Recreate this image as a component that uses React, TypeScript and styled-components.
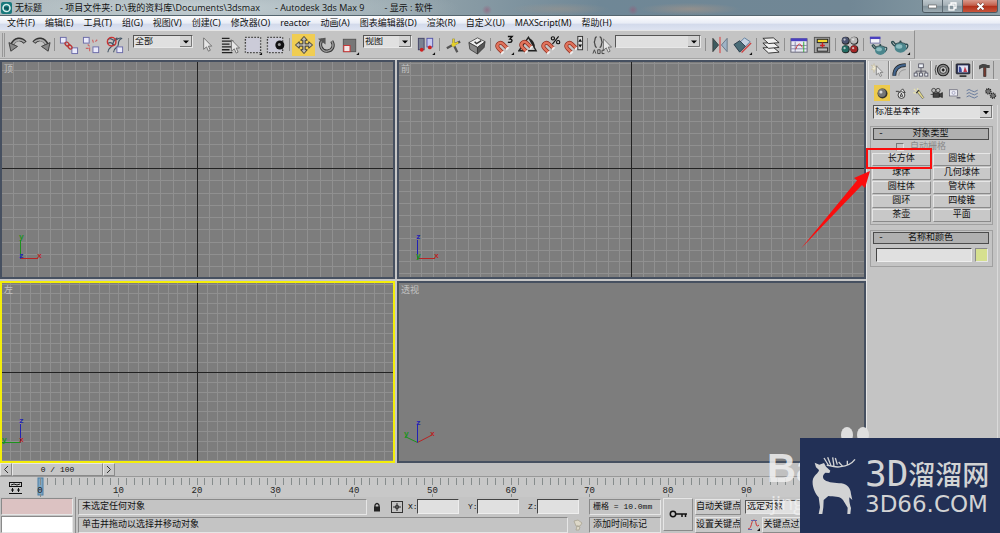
import React from "react";
import styled, { createGlobalStyle, css } from "styled-components";

const UI_FONT = `"Open Sans", "Noto Sans CJK SC", sans-serif`;
const MENU_FONT = `"Noto Sans", "Noto Sans CJK SC", sans-serif`;
const PANEL_FONT = `"Liberation Mono", "Noto Sans CJK SC", monospace`;

const GlobalStyle = createGlobalStyle`
  * { box-sizing: border-box; }
  body { margin: 0; background: #c4c4c4; overflow: hidden; }
  button, input, select { margin: 0; padding: 0; border: 0; border-radius: 0; color: inherit; font: inherit; }
  svg { display: block; flex: none; }
`;

const raised = css`
  border: 1px solid;
  border-color: #e6e6e6 #8a8a8a #8a8a8a #e6e6e6;
`;
const sunken = css`
  border: 1px solid;
  border-color: #8a8a8a #e6e6e6 #e6e6e6 #8a8a8a;
`;

const Window = styled.div`
  position: relative;
  display: flex;
  flex-direction: column;
  height: 100vh;
  overflow: hidden;
  background: #c4c4c4;
  color: #111;
  font: 9px/12px ${PANEL_FONT};
`;

/* ---------- title bar ---------- */

const TitleBar = styled.header`
  display: flex;
  align-items: center;
  flex: none;
  height: 16px;
  padding-left: 1px;
  border-bottom: 1px solid #55666f;
  background:
    radial-gradient(ellipse 260px 26px at 200px 8px, rgba(205, 216, 220, 0.8), transparent),
    radial-gradient(circle 5px at 487px 10px, rgba(150, 90, 120, 0.6), transparent),
    radial-gradient(circle 5px at 633px 10px, rgba(150, 90, 120, 0.6), transparent),
    radial-gradient(ellipse 50px 6px at 560px 9px, rgba(160, 150, 140, 0.5), transparent),
    radial-gradient(ellipse 50px 6px at 690px 9px, rgba(170, 150, 135, 0.6), transparent),
    linear-gradient(90deg, #a9b4b8, #95a5ac 40%, #6f8796 60%, #718795 85%, #8ca0a8);
  font-family: ${UI_FONT};
  white-space: pre;
`;
const TitleText = styled.h1`
  display: flex;
  flex: 1;
  margin: 0 0 0 3px;
  font-size: 9px;
  font-weight: 400;
  line-height: 14px;
`;
const TitlePart = styled.span<{ $gap?: number }>`
  margin-right: ${(p) => p.$gap ?? 0}px;
`;
const WindowButtons = styled.div`
  display: flex;
  align-self: flex-start;
  height: 13px;
  margin-right: 2px;
  border: 1px solid #4d5a62;
  border-top: 0;
  border-radius: 0 0 3px 3px;
  overflow: hidden;
`;
const WindowButton = styled.button<{ $close?: boolean }>`
  display: flex;
  align-items: center;
  justify-content: center;
  width: ${(p) => (p.$close ? 34 : 20)}px;
  border-right: ${(p) => (p.$close ? 0 : 1)}px solid #5b6870;
  background: ${(p) =>
    p.$close
      ? "linear-gradient(#d99a8c, #c4604c 45%, #b02e18 50%, #c8553c)"
      : "linear-gradient(#bcc6cb, #a5b0b6 45%, #83929a 50%, #9cabb2)"};
`;

/* ---------- menu bar ---------- */

const MenuBar = styled.nav`
  display: flex;
  flex: none;
  gap: 10px;
  height: 14px;
  padding-left: 7px;
  background: linear-gradient(#fdfdfe, #e9edf6 50%, #d3daeb 60%, #dde3f1);
  font: 9px/14px ${MENU_FONT};
`;
const MenuItem = styled.button`
  background: none;
  white-space: nowrap;
`;

/* ---------- toolbar ---------- */

const ToolbarRow = styled.div`
  display: flex;
  flex: none;
  height: 30px;
  border-bottom: 1px solid #d8d8d8;
`;
const Toolbar = styled.div`
  display: flex;
  align-items: center;
  padding: 0 2px 0 0;
  border-top: 1px solid #e4e4e4;
  border-right: 1px solid #909090;
  border-bottom: 1px solid #a4a4a4;
`;
const Grip = styled.span`
  width: 3px;
  height: 24px;
  margin: 0 1px 0 2px;
  border: solid #979797;
  border-width: 0 1px;
`;
const ToolButton = styled.button<{ $active?: boolean }>`
  display: flex;
  align-items: center;
  justify-content: center;
  width: 23px;
  height: 22px;
  background: ${(p) => (p.$active ? "#f0cd52" : "none")};
`;
const Separator = styled.span`
  width: 1px;
  height: 13px;
  margin: 0 2px;
  background: #8f8f8f;
`;

const SelectBox = styled.span<{ $width?: number; $tool?: boolean }>`
  position: relative;
  display: block;
  flex: none;
  width: ${(p) => (p.$width ? `${p.$width}px` : "auto")};
  height: ${(p) => (p.$tool ? 13 : 14)}px;
  margin: ${(p) => (p.$tool ? "0 2px 7px" : "0")};
  border: 1px solid;
  border-color: #555 #e8e8e8 #e8e8e8 #555;
  background: #e0e0e0;
  svg {
    position: absolute;
    right: 0;
    top: 0;
    height: 100%;
    pointer-events: none;
  }
`;
const NativeSelect = styled.select`
  display: block;
  width: 100%;
  height: 100%;
  padding: 1px 0 0 1px;
  appearance: none;
  background: transparent;
  font: 9px/11px ${PANEL_FONT};
`;

function Dropdown(props: { label: string; value: string; width?: number; tool?: boolean }) {
  return (
    <SelectBox $width={props.width} $tool={props.tool}>
      <NativeSelect aria-label={props.label}>
        <option>{props.value}</option>
      </NativeSelect>
      <svg width="12" viewBox="0 0 12 11" preserveAspectRatio="none">
        <rect width="12" height="11" fill="#d2d2d2" />
        <path d="M0 10.5H11.5V0" fill="none" stroke="#777" />
        <path d="M3 4.500h6L6 7.500z" fill="#000" />
      </svg>
    </SelectBox>
  );
}

/* ---------- workspace ---------- */

const Workspace = styled.main`
  display: flex;
  flex: 1;
  min-height: 0;
`;
const Viewports = styled.div`
  display: grid;
  flex: 1;
  grid-template-columns: 395fr 469fr;
  grid-template-rows: 219fr 182fr;
  gap: 2px;
  min-width: 0;
  background: #c6c6c6;
`;
const ViewportFrame = styled.section<{ $active?: boolean }>`
  position: relative;
  min-width: 0;
  min-height: 0;
  border: 2px solid ${(p) => (p.$active ? "#f4ee08" : "#465060")};
  background: #7d7d7d;
  overflow: hidden;
`;
const GridCanvas = styled.svg`
  width: 100%;
  height: 100%;
`;
const ViewportLabel = styled.h2`
  position: absolute;
  left: 2px;
  top: 2px;
  margin: 0;
  color: #c3c3c3;
  font-size: 9px;
  font-weight: 400;
`;
const AxisMark = styled.svg`
  position: absolute;
  left: 0;
  bottom: 13px;
  font: 8px "Liberation Mono", monospace;
  font-weight: 700;
`;

type Axis = { name: string; color: string; x: number; y: number; tx: number; ty: number };

function Viewport(props: {
  title: string;
  active?: boolean;
  step?: number;
  cy?: string;
  axes: Axis[];
}) {
  const { step } = props;
  const lines = Array.from({ length: 101 }, (_, i) => i - 50).filter((i) => i !== 0);
  return (
    <ViewportFrame $active={props.active}>
      {step && (
        <GridCanvas>
          <svg x="49.800%" y={props.cy} overflow="visible" shapeRendering="crispEdges">
            {lines.map((i) => (
              <g key={i} stroke="#909090">
                <path d={`M${Math.round(i * step) + 0.5} -900V900`} />
                <path d={`M-2000 ${Math.round(i * step) + 0.5}H2000`} />
              </g>
            ))}
            <path d="M0.500 -900V900M-2000 0.500H2000" stroke="#222" />
          </svg>
        </GridCanvas>
      )}
      <ViewportLabel>{props.title}</ViewportLabel>
      <AxisMark width="46" height="34" viewBox="0 0 46 34">
        {props.axes.map((a) => (
          <g key={a.name}>
            <path d={`M18.500 28.500L${a.x} ${a.y}`} stroke={a.color} />
            <text x={a.tx} y={a.ty} fill={a.color}>
              {a.name}
            </text>
          </g>
        ))}
      </AxisMark>
    </ViewportFrame>
  );
}

const RED = "#b82424";
const GREEN = "#1c931c";
const BLUE = "#2222b4";

/* ---------- command panel ---------- */

const CommandPanel = styled.aside`
  display: flex;
  flex: none;
  flex-direction: column;
  width: 134px;
  padding: 1px 2px 0 1px;
  border-left: 1px solid #e6e6e6;
`;
const TabStrip = styled.div`
  display: flex;
  flex: none;
  height: 19px;
  border-bottom: 1px solid #e2e2e2;
`;
const TabButton = styled.button<{ $active?: boolean }>`
  display: flex;
  align-items: center;
  justify-content: center;
  width: 21px;
  border-right: 1px solid #8a8a8a;
  border-left: 1px solid #e6e6e6;
  background: ${(p) => (p.$active ? "#cdcdcd" : "none")};
`;
const CategoryRow = styled.div`
  display: flex;
  flex: none;
  gap: 2px;
  margin: 5px 0 4px 6px;
`;
const CategoryButton = styled.button<{ $active?: boolean }>`
  display: flex;
  align-items: center;
  justify-content: center;
  width: 16px;
  height: 16px;
  background: ${(p) => (p.$active ? "#edca4c" : "none")};
`;
const PanelBody = styled.div`
  display: flex;
  flex: 1;
  flex-direction: column;
  gap: 5px;
  padding: 0 4px 0 2px;
  border-right: 1px solid #dadada;
`;
const PanelSelect = styled.div`
  margin: 0 0 2px 3px;
`;
const Rollout = styled.section`
  padding: 0 1px 2px;
  ${sunken}
  border-color: #a0a0a0;
`;
const RolloutTitle = styled.button`
  display: grid;
  grid-template-columns: 8px 1fr 12px;
  align-items: center;
  width: calc(100% - 3px);
  height: 12px;
  margin: 1px 2px 0 1px;
  padding-left: 3px;
  border: 1px solid #4c4c4c;
  background: #b0b0b0;
  line-height: 10px;
`;
const AutoGrid = styled.label`
  display: flex;
  align-items: center;
  gap: 6px;
  height: 13px;
  padding-left: 24px;
  color: #8a8a8a;
`;
const TickBox = styled.input`
  width: 8px;
  height: 8px;
  appearance: none;
  border: 1px solid;
  border-color: #777 #e2e2e2 #e2e2e2 #777;
`;
const ButtonGrid = styled.div`
  display: grid;
  grid-template-columns: 1fr 1fr;
  gap: 1px 2px;
`;
const ObjectButton = styled.button`
  height: 13px;
  background: #c8c8c8;
  line-height: 11px;
  ${raised}
`;
const NameRow = styled.div`
  display: flex;
  gap: 3px;
  padding: 4px 3px 2px 4px;
`;
const TextField = styled.input`
  flex: 1;
  min-width: 0;
  height: 14px;
  border: 1px solid;
  border-color: #444 #eee #eee #444;
  background: #e0e0e0;
`;
const Swatch = styled.button`
  width: 13px;
  height: 14px;
  background: #d6e08f;
  ${sunken}
`;

/* ---------- time slider, track bar, status bar ---------- */

const SliderRow = styled.div`
  display: flex;
  flex: none;
  height: 14px;
  background: #c0c0c0;
  border-bottom: 1px solid #999;
`;
const SliderButton = styled.button<{ $width: number }>`
  display: flex;
  align-items: center;
  justify-content: center;
  width: ${(p) => p.$width}px;
  height: 13px;
  background: #c6c6c6;
  font-size: 8px;
  white-space: pre;
  ${raised}
`;
const TrackRow = styled.div`
  display: flex;
  flex: none;
  height: 20px;
  background: #c8c8c8;
`;
const CurveToggle = styled.button`
  width: 40px;
  padding: 2px 0 0 8px;
  background: none;
`;
const Ruler = styled.svg`
  flex: 1;
  min-width: 0;
  height: 20px;
  margin-right: 175px;
  overflow: visible;
  font: 9px "Liberation Mono", monospace;
`;
const StatusBar = styled.footer`
  display: flex;
  flex: none;
  height: 36px;
`;
const Listener = styled.div`
  display: flex;
  flex-direction: column;
  gap: 1px;
  flex: none;
  width: 76px;
  padding: 1px 3px 0 1px;
  border-right: 1px solid #8c8c8c;
`;
const ListenerLine = styled.input<{ $pink?: boolean }>`
  width: 72px;
  height: 17px;
  background: ${(p) => (p.$pink ? "#dcc2c2" : "#fff")};
  ${sunken}
`;
const StatusColumn = styled.div<{ $width?: number }>`
  display: flex;
  flex-direction: column;
  gap: 1px;
  flex: ${(p) => (p.$width ? "none" : "1")};
  width: ${(p) => (p.$width ? `${p.$width}px` : "auto")};
  min-width: 0;
  padding: 1px 0 0 2px;
`;
const StatusLine = styled.div`
  display: flex;
  align-items: center;
  height: 17px;
`;
const Message = styled.output`
  flex: 1;
  min-width: 0;
  height: 16px;
  padding: 0 3px;
  line-height: 14px;
  white-space: nowrap;
  overflow: hidden;
  ${sunken}
`;
const IconButton = styled.button<{ $width: number }>`
  display: flex;
  align-items: center;
  justify-content: center;
  width: ${(p) => p.$width}px;
  height: 16px;
  background: none;
`;
const Coordinate = styled.label`
  display: flex;
  align-items: center;
  width: 60px;
  padding-left: 1px;
  font-size: 8px;
  input {
    flex: none;
    width: 42px;
    height: 15px;
    margin-left: -1px;
  }
`;
const CoordName = styled.span`
  width: 10px;
`;
const KeyButton = styled.button`
  display: flex;
  align-items: center;
  justify-content: center;
  flex: none;
  width: 30px;
  height: 33px;
  margin: 1px 0 0 2px;
  background: #c6c6c6;
  ${raised}
`;
const FlatButton = styled.button<{ $width: number }>`
  width: ${(p) => p.$width}px;
  height: 16px;
  background: #c8c8c8;
  line-height: 14px;
  white-space: nowrap;
  overflow: hidden;
  ${raised}
`;
const GridSize = styled(Message)`
  font-size: 8px;
`;

/* ---------- overlays ---------- */

const HighlightBox = styled.div`
  position: absolute;
  top: 148px;
  right: 68px;
  width: 66px;
  height: 21px;
  border: 2px solid #fb0d0d;
  pointer-events: none;
`;
const HighlightArrow = styled.svg`
  position: absolute;
  top: 168px;
  right: 127px;
  pointer-events: none;
`;
const Watermark = styled.div`
  position: absolute;
  right: 0;
  bottom: 16px;
  width: 233px;
  color: rgba(240, 240, 240, 0.85);
  font-family: "Liberation Sans", sans-serif;
  pointer-events: none;
`;
const WatermarkName = styled.div`
  font-size: 40px;
  font-weight: 700;
  line-height: 42px;
`;
const WatermarkSub = styled.div`
  padding-left: 4px;
  font: 20px/28px "Open Sans", sans-serif;
`;
const WatermarkPaw = styled.svg`
  position: absolute;
  left: 72px;
  bottom: 61px;
`;
const Brand = styled.a`
  position: absolute;
  right: 0;
  bottom: 0;
  display: flex;
  gap: 8px;
  width: 200px;
  height: 95px;
  padding: 17px 0 0 10px;
  background: #223056;
  color: #d2d3d4;
  text-decoration: none;
`;
const BrandText = styled.span`
  display: flex;
  flex-direction: column;
  white-space: nowrap;
`;
const BrandName = styled.strong`
  display: flex;
  align-items: center;
  height: 38px;
  font: 500 27px/38px "Noto Sans CJK SC", sans-serif;
`;
const BrandLatin = styled.span`
  font: 36px/38px "DejaVu Sans Mono", monospace;
`;
const BrandDomain = styled.span`
  font: 23px/22px "DejaVu Sans", sans-serif;
`;

/* ---------- icons ---------- */

const Flyout = () => <path d="M20 18v3h-3z" fill="#111" />;
const magnet = (
  <g fill="none">
    <path d="M9 17.500L4.500 13C1.500 9.500 6 5 9.500 8.500L14 13" stroke="#8c2a1c" strokeWidth="4" />
    <path d="M9 17.500L4.500 13C1.500 9.500 6 5 9.500 8.500L14 13" stroke="#e0735c" strokeWidth="2.600" />
    <path d="M7.500 19l2.800-2.800M12.500 14.500l2.800-2.800" stroke="#eee" strokeWidth="2" />
  </g>
);
const teapot = (
  <g>
    <path d="M4 10C1 8 1 6 0 6l2-1c2 1 2 3 4 4zM15 9c4-3 5 2 1 5" fill="none" stroke="#2b4b50" strokeWidth="1.500" />
    <ellipse cx="10.500" cy="12" rx="6.500" ry="5.500" fill="#4a858c" />
    <ellipse cx="9" cy="10.500" rx="3.500" ry="2.500" fill="#8dbcc0" />
    <path d="M5 7.500q5.500-3 11 0" stroke="#27464b" fill="none" />
    <circle cx="10.500" cy="5.200" r="1.200" fill="#27464b" />
  </g>
);
const dottedArea = (
  <g>
    <rect x="3" y="3" width="15" height="15" fill="#cbcbd8" />
    <rect x="2.500" y="2.500" width="16" height="16" fill="none" stroke="#111" strokeDasharray="1.200 2" strokeWidth="1.400" />
  </g>
);
const squareBlue = (x: number, y: number) => (
  <rect x={x} y={y} width="6" height="6" fill="#e9e9fa" stroke="#6c6ca8" />
);
const cursor = (x: number, y: number) => (
  <path
    transform={`translate(${x} ${y})`}
    d="M0 0V12L3 9.500L5 14L7 13L5 8.700H8.500z"
    fill="#e6e6e6"
    stroke="#666"
    strokeWidth="0.900"
  />
);

const icons: Record<string, React.ReactNode> = {
  undo: (
    <g fill="none">
      <path d="M4 11C7 3 14 3 18 8" stroke="#333" strokeWidth="4" />
      <path d="M5 10C8 4 14 4 17.500 7.500" stroke="#a9a9a9" strokeWidth="2" />
      <path d="M1 8l2 9 7-5z" fill="#888" stroke="#333" strokeWidth="0.900" />
    </g>
  ),
  link: (
    <g fill="none">
      {squareBlue(1.5, 2.5)}
      {squareBlue(13.5, 13.5)}
      <ellipse cx="8.500" cy="9.500" rx="2.500" ry="1.700" transform="rotate(45 8.500 9.500)" stroke="#b33" strokeWidth="1.300" />
      <ellipse cx="11.500" cy="12.500" rx="2.500" ry="1.700" transform="rotate(45 11.500 12.500)" stroke="#b33" strokeWidth="1.300" />
    </g>
  ),
  unlink: (
    <g fill="none">
      {squareBlue(1.5, 2.5)}
      {squareBlue(11.5, 12.5)}
      <path d="M6 10l2 2M11 5l1 3M14 7l2-2M4 14h3M8 13v4" stroke="#c66" strokeWidth="1.200" />
    </g>
  ),
  bind: (
    <g fill="none">
      <path d="M3 5c4-4 5 3 9 0s5-2 6-1M3 9c4-4 5 3 8 1M3 18c0-5 4-4 5-8s2-6 5-7M9 18c0-5 5-4 5-8 0-3 1-5 3-6" stroke="#456" strokeWidth="1.200" />
      <circle cx="7" cy="7" r="4.500" stroke="#c33" strokeWidth="1.500" />
      {squareBlue(12.5, 12.5)}
    </g>
  ),
  select: cursor(7, 3),
  byName: (
    <g>
      <path d="M2 3.500h8M2 6.500h12M2 9.500h8M2 12.500h10M2 15.500h8M2 18.500h11" stroke="#222" strokeWidth="1.400" />
      {cursor(12, 5)}
    </g>
  ),
  region: (
    <g>
      {dottedArea}
      <Flyout />
    </g>
  ),
  crossing: (
    <g>
      <g transform="translate(-1 0)">{dottedArea}</g>
      <circle cx="14.500" cy="10.500" r="4.700" fill="#111" />
      <circle cx="14" cy="10" r="1.600" fill="#999" />
    </g>
  ),
  move: (
    <path
      d="M10.500 1.500L14 5.500H11.700V9.300H15.500V7L19.500 10.500L15.500 14V11.700H11.700V15.500H14L10.500 19.500L7 15.500H9.300V11.700H5.500V14L1.500 10.500L5.500 7V9.300H9.300V5.500H7z"
      fill="#bdb9b0"
      stroke="#333"
    />
  ),
  rotate: (
    <g fill="none">
      <path d="M6 5C1 10 5 17.500 11 17 16.500 16.500 18.500 11 15.500 6.500" stroke="#333" strokeWidth="3.400" />
      <path d="M6 5C1 10 5 17.500 11 17 16.500 16.500 18.500 11 15.500 6.500" stroke="#999" strokeWidth="1.400" />
      <path d="M1 4l8-1v7z" fill="#555" />
    </g>
  ),
  scale: (
    <g>
      <rect x="3.500" y="4.500" width="13" height="13" fill="#777" stroke="#555" />
      <rect x="4" y="11" width="6.500" height="6.500" fill="#f3e6e6" stroke="#c33" />
      <Flyout />
    </g>
  ),
  pivot: (
    <g>
      <rect x="2.500" y="3.500" width="6" height="12" fill="#7a8292" stroke="#446" />
      <rect x="11.500" y="3.500" width="6" height="9" fill="#c6c9ee" stroke="#55a" />
      <circle cx="6" cy="15.500" r="2" fill="#c22" />
      <circle cx="14.500" cy="13" r="2" fill="#c22" />
      <Flyout />
    </g>
  ),
  manipulate: (
    <g fill="none">
      <path d="M10 10V4M10 10l7-3M10 10l-7 4M10 10l4 8" stroke="#555" strokeWidth="2.400" />
      <path d="M10 12V4M10 10l5-2" stroke="#e4cf2b" strokeWidth="2" />
      <circle cx="10" cy="10" r="2.200" fill="#e4cf2b" />
    </g>
  ),
  keyboard: (
    <g stroke="#333" strokeWidth="0.800">
      <path d="M2 8l9-5 8 4-8 6z" fill="#eee" />
      <path d="M2 8l9 5v7l-8-5z" fill="#8a8a8a" />
      <path d="M11 13l8-6-1 6-7 7z" fill="#555" />
      <path d="M8 7l2 2 5-3" fill="none" strokeWidth="1.500" />
    </g>
  ),
  snap: (
    <g>
      <g transform="translate(-1 1)">{magnet}</g>
      <path d="M13.500 1.500h4.500l-2.300 2.700c3.300 0 2.800 4.500-2.200 3.300" fill="none" stroke="#111" strokeWidth="1.500" />
      <Flyout />
    </g>
  ),
  angleSnap: (
    <g>
      <path d="M1 16.500h18L11 2.500zM12 4q5 3 5 9" fill="none" stroke="#222" strokeWidth="1.500" />
      {magnet}
    </g>
  ),
  percentSnap: (
    <g>
      <g transform="translate(-1 1)">{magnet}</g>
      <g fill="none" stroke="#111" strokeWidth="1.200">
        <circle cx="12.500" cy="3.500" r="1.700" />
        <circle cx="18" cy="7.500" r="1.700" />
        <path d="M18.500 1.500l-6.500 8" />
      </g>
    </g>
  ),
  spinnerSnap: (
    <g>
      <g transform="translate(-1 1)">{magnet}</g>
      <rect x="14.500" y="1.500" width="5" height="14" fill="#ddd" stroke="#333" />
      <path d="M15 7l2-3 2 3zM15 10l2 3 2-3z" fill="#111" />
    </g>
  ),
  namedSets: (
    <g fill="none">
      <path d="M5 2C2 2 4 7 2 7.500 4 8 2 13 5 13M8 2c3 0 1 5 3 5.500C9 8 11 13 8 13" stroke="#444" strokeWidth="1.300" />
      {cursor(12, 4)}
      <path d="M1 19.500l1.500-4L4 19.500M6 15.500v4h2.500v-4zM13 16h-2.500v3.500H13" stroke="#444" />
    </g>
  ),
  mirror: (
    <g>
      <path d="M3 3.500v14l6-7z" fill="#3d5b60" stroke="#333" strokeWidth="0.800" />
      <path d="M18 3.500v14l-6-7z" fill="#9fb3c6" stroke="#567" strokeWidth="0.800" />
      <path d="M10.500 2v17" stroke="#d33" />
    </g>
  ),
  align: (
    <g strokeWidth="0.900">
      <path d="M12 3l6 4-5 5-6-4z" fill="#c6d3e2" stroke="#579" />
      <path d="M1 10l6-4 6 6-6 6z" fill="#4a6d78" stroke="#234" />
      <path d="M9 18.500l10-10" stroke="#c44" strokeWidth="1.500" />
      <Flyout />
    </g>
  ),
  layers: (
    <g fill="#f0f0f0" stroke="#222" strokeWidth="0.900">
      <path d="M2 13.500l11-.5 6 5-11 1z" />
      <path d="M2 8.500l11-.5 6 5-11 1z" />
      <path d="M2 3.500l11-.5 6 5-11 1z" />
    </g>
  ),
  curves: (
    <g fill="none">
      <rect x="2" y="4" width="17" height="14" fill="#e9e9f3" stroke="#667" />
      <path d="M2 5h17" stroke="#4a40c0" strokeWidth="3" />
      <path d="M6.500 7v11M2 11h17M2 14.500h17" stroke="#88a" />
      <path d="M7 15c3-8 5-6 7-2" stroke="#c33" />
      <path d="M15.500 7v11" stroke="#3a3" />
    </g>
  ),
  schematic: (
    <g>
      <rect x="2.500" y="2.500" width="16" height="16" fill="#a5a5a5" stroke="#555" />
      <rect x="5.500" y="4.500" width="11" height="3.500" fill="#f2d830" stroke="#222" />
      <rect x="5.500" y="13.500" width="11" height="3.500" fill="#bbb" stroke="#222" />
      <path d="M11 8v5M8.500 11h5" stroke="#c22" strokeWidth="1.500" />
    </g>
  ),
  material: (
    <g>
      {[
        [6, 6, "#4c5470"],
        [15, 6, "#b9b9b9"],
        [6, 15, "#226b62"],
        [15, 15, "#a32626"],
      ].map(([x, y, c]) => (
        <g key={`${x}-${y}`}>
          <circle cx={x as number} cy={y as number} r="4.200" fill="#222" />
          <circle cx={(x as number) - 0.4} cy={(y as number) - 0.4} r="3.600" fill={c as string} />
          <circle cx={(x as number) - 1.2} cy={(y as number) - 1.2} r="1.200" fill="#eee" opacity="0.700" />
        </g>
      ))}
    </g>
  ),
  renderScene: (
    <g>
      <rect x="2.500" y="2.500" width="10" height="6" fill="#f3f3f8" stroke="#77a" />
      <path d="M2 3h11" stroke="#4a40c0" strokeWidth="2.500" />
      <g transform="translate(4 6) scale(0.85)">{teapot}</g>
    </g>
  ),
  quickRender: (
    <g>
      <g transform="translate(0 2) scale(0.95)">{teapot}</g>
      <Flyout />
    </g>
  ),
  create: (
    <g>
      <path d="M4 2l1 4 4-1-3 3 3 3-4-1-1 4-1-4-3 0 3-3-3-3 3 1z" fill="#f0ead0" stroke="#b5ab8a" strokeWidth="0.500" />
      {cursor(7, 5)}
    </g>
  ),
  modify: (
    <g fill="none">
      <path d="M3 18C3 9 8 4 18 4" stroke="#222" strokeWidth="5" />
      <path d="M3 18C3 9 8 4 18 4" stroke="#43658d" strokeWidth="3" />
      <path d="M9 18c0-5 4-8 9-8" stroke="#888" />
    </g>
  ),
  hierarchy: (
    <g fill="#eef2f8" stroke="#445">
      <path d="M10.500 7v4M4 15v-3h13v3M10.500 11v4" fill="none" />
      <rect x="7.500" y="2.500" width="6" height="5" />
      <rect x="1.500" y="14.500" width="4" height="4" />
      <rect x="8.500" y="14.500" width="4" height="4" />
      <rect x="15.500" y="14.500" width="4" height="4" />
    </g>
  ),
  motion: (
    <g fill="none" stroke="#222">
      <circle cx="12" cy="10.500" r="7.500" fill="#888" strokeWidth="1.500" />
      <circle cx="12" cy="10.500" r="4.500" fill="#ccc" />
      <circle cx="12" cy="10.500" r="1.500" fill="#111" />
      <path d="M3 4q-3 6 0 13" />
    </g>
  ),
  display: (
    <g>
      <rect x="1.500" y="2.500" width="18" height="13" rx="1" fill="#31375c" stroke="#111" />
      <rect x="4" y="4.500" width="13" height="9" fill="#dfe4f4" />
      <path d="M5 13V6q4 0 4 7z" fill="#3d4c9c" />
      <path d="M11 13l2-7 3 7z" fill="#c23a4c" />
      <path d="M6 18.500h9" stroke="#222" strokeWidth="2" />
    </g>
  ),
  utilities: (
    <g>
      <path d="M10 6h3v13h-3z" fill="#7c3b30" stroke="#222" strokeWidth="0.800" />
      <path d="M4 5c3-3 8-3 11-1h3v4h-3q-6-2-11 2z" fill="#444" />
    </g>
  ),
  geometry: (
    <g>
      <circle cx="10.500" cy="10.500" r="8" fill="#333" />
      <circle cx="9.500" cy="9.500" r="6.500" fill="#777" />
      <circle cx="8" cy="8" r="2.500" fill="#ddd" />
    </g>
  ),
  shapes: (
    <g fill="#e6e6e6" stroke="#222" strokeWidth="1.300">
      <path d="M8 9l6-6 4 6z" />
      <circle cx="12" cy="13" r="5.500" />
      <path d="M10 15l2-5 2 5zM3 7h5" />
    </g>
  ),
  lights: (
    <g>
      <path d="M8 8l3-3 8 12-2 2z" fill="#e6dc8a" stroke="#555" />
      <path d="M3 3l6 6M2 9l5 1M9 2l1 5" stroke="#e8e3b0" strokeWidth="2" />
      <path d="M7 10l4-5" stroke="#333" strokeWidth="2" />
    </g>
  ),
  cameras: (
    <g fill="#444" stroke="#111">
      <circle cx="6" cy="5.500" r="3.300" fill="#bbb" />
      <circle cx="13" cy="5.500" r="3.300" fill="#bbb" />
      <rect x="5" y="9.500" width="10" height="7" />
      <path d="M15 12l5-3v8l-5-2zM1 12h4" />
    </g>
  ),
  helpers: (
    <g fill="none">
      <rect x="2.500" y="4.500" width="13" height="10" fill="#ececf4" stroke="#556" />
      <circle cx="9" cy="9.500" r="2.500" stroke="#88a" />
      <path d="M14 17.500h6" stroke="#334" strokeWidth="1.500" />
    </g>
  ),
  warps: (
    <path
      d="M1 6q4-4 8 0t10-1M1 11q4-4 8 0t10-1M1 16q4-4 8 0t10-1"
      fill="none"
      stroke="#5b7196"
      strokeWidth="1.400"
    />
  ),
  systems: (
    <g fill="#777" stroke="#222" strokeWidth="2.400" strokeDasharray="1.800 1.200">
      <circle cx="7" cy="7" r="4" />
      <circle cx="14.500" cy="14" r="4" />
    </g>
  ),
};

function Icon({ name, size = 20, flip }: { name: string; size?: number; flip?: boolean }) {
  return (
    <svg width={size} height={size} viewBox="0 0 21 21" aria-hidden="true">
      {flip ? <g transform="translate(21 0) scale(-1 1)">{icons[name]}</g> : icons[name]}
    </svg>
  );
}

/* ---------- data ---------- */

const MENUS = [
  "文件(F)", "编辑(E)", "工具(T)", "组(G)", "视图(V)", "创建(C)", "修改器(O)", "reactor",
  "动画(A)", "图表编辑器(D)", "渲染(R)", "自定义(U)", "MAXScript(M)", "帮助(H)",
];

const PRIMITIVES = [
  "长方体", "圆锥体", "球体", "几何球体", "圆柱体", "管状体", "圆环", "四棱锥", "茶壶", "平面",
];

function Tools({ names }: { names: string[] }) {
  return (
    <>
      {names.map((name) => (
        <ToolButton key={name} $active={name === "move"} aria-label={name}>
          {name === "redo" ? <Icon name="undo" flip /> : <Icon name={name} />}
        </ToolButton>
      ))}
    </>
  );
}

function TimeRuler() {
  const frames = Array.from({ length: 101 }, (_, i) => i);
  const decades = frames.filter((f) => f % 10 === 0);
  return (
    <Ruler>
      <rect x="-2" y="1" width="5" height="17" fill="#7fa6c2" stroke="#4d7fa5" />
      <g stroke="#868c8c" shapeRendering="crispEdges">
        {frames.map((f) => (
          <line key={f} x1={`${f}%`} x2={`${f}%`} y1="1" y2="8" />
        ))}
        {decades.map((f) => (
          <line key={f} x1={`${f}%`} x2={`${f}%`} y1="17" y2="20" />
        ))}
      </g>
      {decades.map((f) => (
        <text key={f} x={`${f}%`} y="16" textAnchor="middle" fill="#222">
          {f}
        </text>
      ))}
    </Ruler>
  );
}

export default function App() {
  return (
    <Window>
      <GlobalStyle />
      <TitleBar>
        <svg width="11" height="12" viewBox="0 0 11 12">
          <rect width="11" height="12" rx="2" fill="#19787c" />
          <circle cx="5.500" cy="6" r="3.500" fill="none" stroke="#d7efee" strokeWidth="1.600" />
          <path d="M3 6h3.500v2.500" fill="none" stroke="#0c4d52" strokeWidth="1.500" />
        </svg>
        <TitleText>
          <TitlePart $gap={18}>无标题</TitlePart>
          <TitlePart $gap={15}>- 项目文件夹: D:\我的资料库\Documents\3dsmax</TitlePart>
          <TitlePart $gap={20}>- Autodesk 3ds Max 9</TitlePart>
          <TitlePart>- 显示 : 软件</TitlePart>
        </TitleText>
        <WindowButtons>
          <WindowButton aria-label="最小化">
            <svg width="9" height="5">
              <rect x="0.500" y="1" width="8" height="3" fill="#fff" stroke="#555" strokeWidth="0.600" />
            </svg>
          </WindowButton>
          <WindowButton aria-label="还原">
            <svg width="9" height="9" fill="none" stroke="#fff" strokeWidth="1.300">
              <path d="M3 3V1h5v5H6" />
              <rect x="1" y="3" width="5" height="5" />
            </svg>
          </WindowButton>
          <WindowButton $close aria-label="关闭">
            <svg width="9" height="9">
              <path d="M1.500 1.500l6 6M7.500 1.500l-6 6" stroke="#5a2a22" strokeWidth="3" />
              <path d="M1.500 1.500l6 6M7.500 1.500l-6 6" stroke="#fff" strokeWidth="2" />
            </svg>
          </WindowButton>
        </WindowButtons>
      </TitleBar>

      <MenuBar>
        {MENUS.map((m) => (
          <MenuItem key={m}>{m}</MenuItem>
        ))}
      </MenuBar>

      <ToolbarRow>
        <Toolbar role="toolbar">
          <Grip />
          <Tools names={["undo", "redo"]} />
          <Separator />
          <Tools names={["link", "unlink", "bind"]} />
          <Separator />
          <Dropdown tool label="选择过滤器" value="全部" width={60} />
          <Tools names={["select", "byName", "region", "crossing"]} />
          <Separator />
          <Tools names={["move", "rotate", "scale"]} />
          <Dropdown tool label="参考坐标系" value="视图" width={49} />
          <Tools names={["pivot"]} />
          <Separator />
          <Tools names={["manipulate", "keyboard"]} />
          <Separator />
          <Tools names={["snap", "angleSnap", "percentSnap", "spinnerSnap"]} />
          <Separator />
          <Tools names={["namedSets"]} />
          <Dropdown tool label="命名选择集" value="" width={86} />
          <Separator />
          <Tools names={["mirror", "align"]} />
          <Separator />
          <Tools names={["layers"]} />
          <Separator />
          <Tools names={["curves", "schematic"]} />
          <Separator />
          <Tools names={["material"]} />
          <Separator />
          <Tools names={["renderScene", "quickRender"]} />
        </Toolbar>
      </ToolbarRow>

      <Workspace>
        <Viewports>
          <Viewport
            title="顶"
            step={12.25}
            cy="49.500%"
            axes={[
              { name: "x", color: RED, x: 36, y: 28.5, tx: 35, ty: 28 },
              { name: "y", color: GREEN, x: 18.5, y: 10, tx: 17, ty: 9 },
              { name: "z", color: BLUE, x: 18.5, y: 27, tx: 17, ty: 28 },
            ]}
          />
          <Viewport
            title="前"
            step={11.65}
            cy="49.500%"
            axes={[
              { name: "x", color: RED, x: 36, y: 28.5, tx: 35, ty: 28 },
              { name: "z", color: BLUE, x: 18.5, y: 10, tx: 17, ty: 9 },
              { name: "y", color: GREEN, x: 18.5, y: 27, tx: 17, ty: 28 },
            ]}
          />
          <Viewport
            title="左"
            active
            step={9.82}
            cy="50%"
            axes={[
              { name: "y", color: GREEN, x: 0, y: 28.5, tx: 0, ty: 28 },
              { name: "z", color: BLUE, x: 18.5, y: 10, tx: 17, ty: 9 },
              { name: "x", color: RED, x: 18.5, y: 27, tx: 17, ty: 28 },
            ]}
          />
          <Viewport
            title="透视"
            axes={[
              { name: "x", color: RED, x: 33, y: 21, tx: 31, ty: 22 },
              { name: "y", color: GREEN, x: 6, y: 22.5, tx: 5, ty: 22 },
              { name: "z", color: BLUE, x: 18.5, y: 11, tx: 17, ty: 11 },
            ]}
          />
        </Viewports>

        <CommandPanel>
          <TabStrip>
            {["create", "modify", "hierarchy", "motion", "display", "utilities"].map((n) => (
              <TabButton key={n} $active={n === "create"} aria-label={n}>
                <Icon name={n} size={16} />
              </TabButton>
            ))}
          </TabStrip>
          <CategoryRow>
            {["geometry", "shapes", "lights", "cameras", "helpers", "warps", "systems"].map((n) => (
              <CategoryButton key={n} $active={n === "geometry"} aria-label={n}>
                <Icon name={n} size={13} />
              </CategoryButton>
            ))}
          </CategoryRow>
          <PanelBody>
            <PanelSelect>
              <Dropdown label="对象类别" value="标准基本体" />
            </PanelSelect>
            <Rollout>
              <RolloutTitle>
                <span>-</span>
                <span>对象类型</span>
              </RolloutTitle>
              <AutoGrid>
                <TickBox type="checkbox" disabled />
                自动栅格
              </AutoGrid>
              <ButtonGrid>
                {PRIMITIVES.map((p) => (
                  <ObjectButton key={p}>{p}</ObjectButton>
                ))}
              </ButtonGrid>
            </Rollout>
            <Rollout>
              <RolloutTitle>
                <span>-</span>
                <span>名称和颜色</span>
              </RolloutTitle>
              <NameRow>
                <TextField aria-label="名称" />
                <Swatch aria-label="颜色" />
              </NameRow>
            </Rollout>
          </PanelBody>
        </CommandPanel>
      </Workspace>

      <SliderRow>
        <SliderButton $width={12} aria-label="上一帧">
          <svg width="6" height="9" fill="none" stroke="#333">
            <path d="M5 1L1.500 4.500L5 8" />
          </svg>
        </SliderButton>
        <SliderButton $width={91}>0 / 100</SliderButton>
        <SliderButton $width={12} aria-label="下一帧">
          <svg width="6" height="9" fill="none" stroke="#333">
            <path d="M1 1l3.500 3.500L1 8" />
          </svg>
        </SliderButton>
      </SliderRow>

      <TrackRow>
        <CurveToggle aria-label="打开迷你曲线编辑器">
          <svg width="15" height="14" fill="none" stroke="#111">
            <rect x="1.500" y="1.500" width="12" height="4" />
            <path d="M3 4l3-1 3 1 3-1M1 12.500h13M4.500 7v4M10.500 7v4M3 9h3M9 9h3" />
          </svg>
        </CurveToggle>
        <TimeRuler />
      </TrackRow>

      <StatusBar>
        <Listener>
          <ListenerLine $pink aria-label="宏录制器" />
          <ListenerLine aria-label="侦听器" />
        </Listener>
        <StatusColumn>
          <StatusLine>
            <Message>未选定任何对象</Message>
            <IconButton $width={20} aria-label="锁定选择">
              <svg width="8" height="10">
                <path d="M2 5V3q2-3 4 0v2" fill="none" stroke="#222" strokeWidth="1.300" />
                <rect x="1" y="4.500" width="6" height="5" fill="#222" />
              </svg>
            </IconButton>
            <IconButton $width={20} aria-label="绝对模式">
              <svg width="12" height="12" fill="none" stroke="#333">
                <rect x="0.500" y="0.500" width="11" height="11" />
                <circle cx="6" cy="6" r="1.800" />
                <path d="M6 2v8M2 6h8" />
              </svg>
            </IconButton>
            {["X:", "Y:", "Z:"].map((c) => (
              <Coordinate key={c}>
                <CoordName>{c}</CoordName>
                <TextField />
              </Coordinate>
            ))}
          </StatusLine>
          <StatusLine>
            <Message>单击并拖动以选择并移动对象</Message>
            <IconButton $width={19} aria-label="通讯中心">
              <svg width="10" height="12" fill="#ddd8c8" stroke="#a9a493" strokeWidth="0.800">
                <path d="M1 2l4-1 4 3-2 3H3zM4 7l3 1-1 3H3z" />
              </svg>
            </IconButton>
          </StatusLine>
        </StatusColumn>
        <StatusColumn $width={74}>
          <StatusLine>
            <GridSize>栅格 = 10.0mm</GridSize>
          </StatusLine>
          <StatusLine>
            <Message>添加时间标记</Message>
          </StatusLine>
        </StatusColumn>
        <KeyButton aria-label="设置关键点">
          <svg width="19" height="9" fill="none" stroke="#111" strokeWidth="1.500">
            <circle cx="4" cy="4" r="2.700" />
            <path d="M7 4h11M13 4v3M16.500 4v3" />
          </svg>
        </KeyButton>
        <StatusColumn $width={50}>
          <StatusLine>
            <FlatButton $width={46}>自动关键点</FlatButton>
          </StatusLine>
          <StatusLine>
            <FlatButton $width={46}>设置关键点</FlatButton>
          </StatusLine>
        </StatusColumn>
        <StatusColumn $width={257}>
          <StatusLine>
            <Dropdown label="选择集" value="选定对象" width={90} />
          </StatusLine>
          <StatusLine>
            <IconButton $width={17} aria-label="新建关键点切线">
              <svg width="13" height="13" fill="none">
                <path d="M1 11c4 0 3-9 6-9s1 9 5 5" stroke="#c33" />
                <path d="M4 2.500h6M1 11.500h4" stroke="#66a" />
                <path d="M13 10v3h-3z" fill="#111" />
              </svg>
            </IconButton>
            <FlatButton $width={73}>关键点过滤器...</FlatButton>
          </StatusLine>
        </StatusColumn>
      </StatusBar>

      <HighlightBox />
      <HighlightArrow width="74" height="82" viewBox="0 0 74 82">
        <path d="M2 80.500L58 12.500L55 10L71 3L66 20L63 17z" fill="#fb0d0d" />
      </HighlightArrow>

      <Watermark>
        <WatermarkPaw width="32" height="30" fill="#dedede">
          <ellipse cx="8" cy="9" rx="6" ry="8" />
          <ellipse cx="24" cy="9" rx="6" ry="8" />
        </WatermarkPaw>
        <WatermarkName>Ba</WatermarkName>
        <WatermarkSub>jing</WatermarkSub>
      </Watermark>

      <Brand href="#">
        <svg width="47" height="60" viewBox="150 105 141 180">
          <path
            d="M164 128L178 134L192 129L198 140L211 152L208 159L196 158C188 164 186 173 194 180C206 188 226 189 244 190C262 192 272 205 273 222L277 240L268 232C267 244 270 254 273 264L271 282L262 282L263 263L249 240C238 226 222 232 205 228L191 240L190 262L187 282L176 282L180 262L176 232C166 222 156 200 158 182C160 166 176 160 177 150L168 142Z"
            fill="#d2d3d4"
          />
          <path
            d="M200 136C216 136 226 144 242 140C262 138 276 130 285 118M205 135L192 114M213 137L203 112M222 138L218 112M232 134L226 114M262 134L262 122M248 139L236 126"
            fill="none"
            stroke="#d2d3d4"
            strokeWidth="4"
          />
        </svg>
        <BrandText>
          <BrandName>
            <BrandLatin>3D</BrandLatin>溜溜网
          </BrandName>
          <BrandDomain>3D66.COM</BrandDomain>
        </BrandText>
      </Brand>
    </Window>
  );
}
